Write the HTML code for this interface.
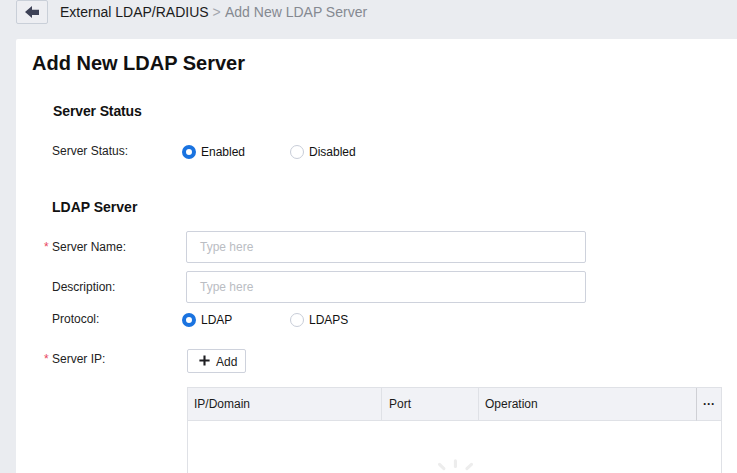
<!DOCTYPE html>
<html><head><meta charset="utf-8"><title>Add New LDAP Server</title>
<style>
*{box-sizing:border-box}
html,body{margin:0;padding:0}
body{width:737px;height:473px;overflow:hidden;background:#eaecf0;font-family:"Liberation Sans",Arial,sans-serif;color:#1b1b1b;position:relative}
.abs{position:absolute;white-space:nowrap}
.back{left:16px;top:0;width:32px;height:24px;border:1px solid #c9cfd8;border-radius:2px;background:#edeef2}
.crumb{left:60px;top:3px;font-size:14px;line-height:18px;color:#1b1b1b}
.crumb span{color:#858991}.crumb span.gt{color:#a3a7ae}
.panel{left:16px;top:39px;width:721px;height:434px;background:#fff;border-top-left-radius:2px}
h1{margin:0;font-size:20px;line-height:24px;font-weight:bold;left:32px;top:51px;color:#111}
.sec{font-size:14px;line-height:16px;font-weight:bold;color:#111;left:53px}
.lbl{font-size:12px;line-height:14px;color:#222;left:52px}
.req{color:#e8465e;font-size:12px;line-height:14px;left:44px}
.radio{width:14px;height:14px;border-radius:50%;border:1px solid #c8cdd8;background:#fff}
.radio.on{border:4px solid #1a73e0}
.rl{font-size:12px;line-height:14px;color:#111}
.inp{left:186px;width:400px;height:32px;border:1px solid #ced2dc;border-radius:2px;background:#fff;font-size:12px;line-height:30px;color:#babdc3;padding-left:13px}
.btn{left:187px;top:349px;width:59px;height:24px;border:1px solid #ced2dc;border-radius:2px;background:#fff;font-size:12px;line-height:23px;color:#222}
.tbl{left:187px;top:387px;width:535px;height:90px;border:1px solid #dfe1e6;background:#fff}
.th{top:0;height:33px;background:#f1f2f6;border-bottom:1px solid #dfe1e6;font-size:12px;line-height:33px;color:#1b1b1b;padding-left:6px;border-right:1px solid #dfe1e6}
</style></head><body>
<div class="abs back"><svg width="30" height="22" viewBox="0 0 30 22" style="display:block"><path d="M8 11 L15 4.9 L15 8.8 L22 8.8 L22 13.9 L15 13.9 L15 17.1 Z" fill="#3d4156"/></svg></div>
<div class="abs crumb">External LDAP/RADIUS <span class="gt">&gt;</span> <span style="margin-left:.4px">Add New LDAP Server</span></div>
<div class="abs panel"></div>
<h1 class="abs">Add New LDAP Server</h1>

<div class="abs sec" style="top:103px;letter-spacing:-.12px">Server Status</div>
<div class="abs lbl" style="top:144px">Server Status:</div>
<div class="abs radio on" style="left:182px;top:145px"></div>
<div class="abs rl" style="left:201px;top:145px">Enabled</div>
<div class="abs radio" style="left:290px;top:145px"></div>
<div class="abs rl" style="left:309px;top:145px">Disabled</div>

<div class="abs sec" style="top:199px;left:52px">LDAP Server</div>

<div class="abs req" style="top:240px">*</div>
<div class="abs lbl" style="top:240px">Server Name:</div>
<div class="abs inp" style="top:231px">Type here</div>

<div class="abs lbl" style="top:280px">Description:</div>
<div class="abs inp" style="top:271px">Type here</div>

<div class="abs lbl" style="top:312px">Protocol:</div>
<div class="abs radio on" style="left:182px;top:313px"></div>
<div class="abs rl" style="left:201px;top:313px">LDAP</div>
<div class="abs radio" style="left:290px;top:313px"></div>
<div class="abs rl" style="left:309px;top:313px">LDAPS</div>

<div class="abs req" style="top:352px">*</div>
<div class="abs lbl" style="top:352px">Server IP:</div>
<div class="abs btn"><svg class="abs" style="left:10.7px;top:5px" width="11" height="11" viewBox="0 0 11 11"><path d="M5.5 0.4V10.6M0.4 5.5H10.6" stroke="#1e1e22" stroke-width="2.1" fill="none"/></svg><span class="abs" style="left:28px;top:1px">Add</span></div>

<div class="abs tbl">
  <div class="abs th" style="left:0;width:194px">IP/Domain</div>
  <div class="abs th" style="left:194px;width:97px;padding-left:7px">Port</div>
  <div class="abs th" style="left:291px;width:218px;border-right-color:#cfd0d5">Operation</div>
  <div class="abs th" style="left:509px;width:24px;border-right:0;padding-left:0;text-align:center;font-weight:bold">···</div>
  <svg class="abs" style="left:234px;top:59px" width="70" height="40" viewBox="0 0 70 40"><g stroke="#ededed" stroke-width="3.1" stroke-linecap="round"><path d="M33.4 13.8V19.5"/><path d="M17.5 17.3L21.9 21.6"/><path d="M49.5 17.3L44.9 21.6"/></g></svg>
</div>
</body></html>
